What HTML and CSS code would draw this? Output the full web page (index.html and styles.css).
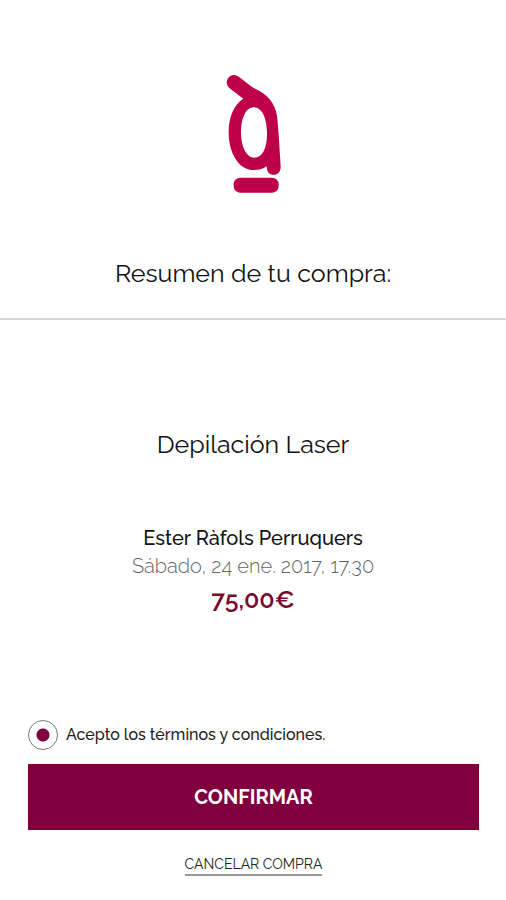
FILE: index.html
```html
<!DOCTYPE html>
<html lang="es">

<head>
  <meta charset="UTF-8">
  <meta name="viewport" content="width=device-width, initial-scale=1">
  <title>Resumen de tu compra</title>
  <link rel="stylesheet" href="styles.css">
</head>

<body>
  <header class="header">
    <svg class="logo" viewBox="24 20 192 378" role="img" aria-label="Logo">
      <path d="M63 54 L122 99" stroke-width="44" stroke-linecap="round" />
      <path fill-rule="evenodd" d="M100 60 L140 80 C176 102 190 130 193 162 L198 226 L203 307 C204 338 165 339 162 314 L161 306 C149 315 137 317 122 317 C76 317 47 264 47 205 C47 158 62 121 91 103 Z M122 129 C98 129 84 163 84 205 C84 247 101 280 124 280 C148 280 162 251 162 208 C162 163 148 129 122 129 Z" />
      <rect x="62" y="340" width="135" height="45" rx="20" />
    </svg>
    <h1>Resumen de tu compra:</h1>
  </header>

  <main class="summary">
    <h2>Depilación Laser</h2>
    <p class="salon">Ester Ràfols Perruquers</p>
    <p class="date">Sábado, 24 ene. 2017, 17.30</p>
    <p class="price">75,00€</p>
  </main>

  <form class="checkout">
    <div class="terms">
      <input type="radio" id="terms" name="terms" checked required>
      <label for="terms">Acepto los términos y condiciones.</label>
    </div>
    <button type="submit">CONFIRMAR</button>
    <a class="cancel" href="#">CANCELAR COMPRA</a>
  </form>
</body>

</html>
```

FILE: styles.css
```css
:root {
  --brand: #bd0049;
  --wine: #80003f;
}

* {
  box-sizing: border-box;
}

body {
  margin: 0;
  min-height: 100vh;
  display: flex;
  flex-direction: column;
  background-color: #fff;
  font-family: Raleway, Lato, sans-serif;
  color: #111;
  text-align: center;
}

h1,
h2,
p {
  margin: 0;
}

h1,
h2 {
  font-size: 25px;
  font-weight: 400;
  line-height: 32px;
}

.header {
  padding: 71px 28px 29px;
  border-bottom: 2px solid #d8d8d8;
}

.logo {
  display: block;
  width: 64px;
  height: 126px;
  margin: 0 auto 60px;
  fill: var(--brand);
}

.logo [stroke-linecap] {
  stroke: var(--brand);
}

.summary {
  padding: 108px 28px 32px;
}

.summary h2 {
  margin-bottom: 64px;
}

.salon,
.date {
  font-size: 20px;
  line-height: 28px;
}

.salon {
  font-weight: 500;
}

.date {
  color: #666;
  font-weight: 300;
}

.price {
  margin-top: 3px;
  color: #7a0a2c;
  font-size: 25px;
  font-weight: 600;
  line-height: 32px;
}

.checkout {
  margin-top: auto;
  padding: 0 27px 24px 28px;
}

.terms {
  display: flex;
  align-items: center;
  gap: 8px;
  margin-bottom: 14px;
}

.terms input {
  appearance: none;
  flex: none;
  width: 30px;
  height: 30px;
  margin: 0;
  border: 1px solid #777;
  border-radius: 50%;
}

.terms input:checked {
  background: radial-gradient(circle, var(--wine) 6px, transparent 7px);
}

.terms label {
  color: #222;
  font-size: 16px;
  font-weight: 500;
  line-height: 24px;
}

button {
  display: block;
  width: 100%;
  padding: 20px;
  border: 1px solid #780024;
  background-color: var(--wine);
  color: #fff;
  font-family: inherit;
  font-size: 20px;
  font-weight: 700;
  line-height: 24px;
  cursor: pointer;
}

.cancel {
  display: inline-block;
  margin-top: 24px;
  border-bottom: 2px solid #999;
  color: #222;
  font-size: 14px;
  line-height: 20px;
  text-decoration: none;
}
```
